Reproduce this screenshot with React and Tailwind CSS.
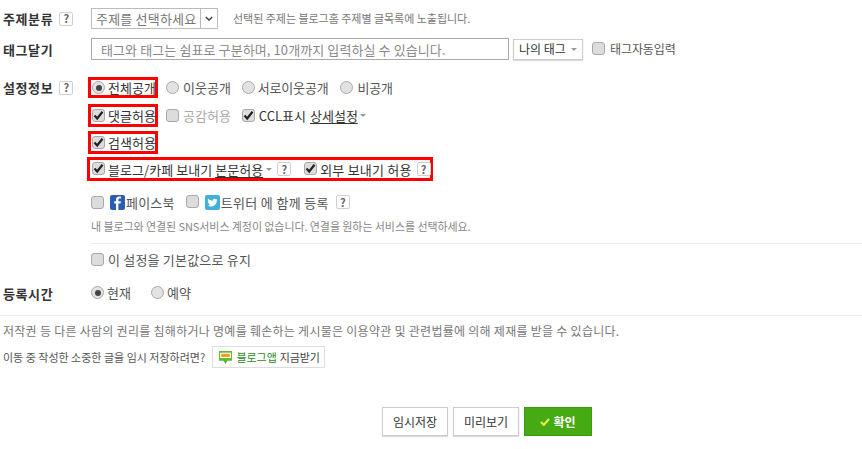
const KR = { fontFamily: '"Noto Sans CJK KR", "Liberation Sans", sans-serif' };

function Help({ className = "" }) {
  return (
    <span className={`inline-flex h-[14px] w-[14px] shrink-0 items-center justify-center rounded-[2px] border border-[#cfcfcf] bg-white text-[11px] font-bold leading-none text-[#666] ${className}`}>?</span>
  );
}

function Check({ on = false }) {
  return (
    <span className="relative inline-block h-[13px] w-[13px] shrink-0 rounded-[3px] border border-[#a9a9a9] bg-[#dcdcdc]">
      {on && (
        <svg viewBox="0 0 13 13" className="absolute left-[-1px] top-[-1px] h-[13px] w-[13px]">
          <path d="M2.5 6.5 L5.2 9.5 L10.5 2.8" fill="none" stroke="#222" strokeWidth="2.2" />
        </svg>
      )}
    </span>
  );
}

function Radio({ on = false }) {
  return (
    <span className="inline-flex h-[13px] w-[13px] shrink-0 items-center justify-center rounded-full border border-[#a9a9a9] bg-[#e2e2e2]">
      {on && <span className="h-[6px] w-[6px] rounded-full bg-[#444]" />}
    </span>
  );
}

function Caret({ className = "" }) {
  return <span className={`block h-0 w-0 border-x-[3px] border-t-[3px] border-x-transparent border-t-[#999] ${className}`} />;
}

function Row({ label, help, className = "", children }) {
  return (
    <div className={`flex items-center ${className}`}>
      <div className="flex w-[91px] shrink-0 items-center gap-[6px] pl-[3px]">
        {label && <span className="text-[13px] font-bold tracking-[0.6px] text-[#333]">{label}</span>}
        {help && <Help />}
      </div>
      {children}
    </div>
  );
}

export default function App() {
  return (
    <div style={KR} className="h-[449px] w-[862px] overflow-hidden bg-white text-[13px] leading-none text-[#555]">
      <Row label="주제분류" help className="pt-[8px]">
        <div className="flex h-[21px] w-[127px] items-center border border-[#bbb] text-[#777]">
          <span className="w-[108px] pl-[4px] text-[13px] tracking-[0.2px] whitespace-nowrap">주제를 선택하세요</span>
          <span className="flex h-full flex-1 items-center justify-center border-l border-[#bbb]">
            <svg viewBox="0 0 10 6" className="h-[5px] w-[8px]"><path d="M1 1 L5 5 L9 1" fill="none" stroke="#444" strokeWidth="1.8" /></svg>
          </span>
        </div>
        <span className="ml-[15px] text-[11px] tracking-[-0.03px] text-[#777]">선택된 주제는 블로그홈 주제별 글목록에 노출됩니다.</span>
      </Row>

      <Row label="태그달기" className="mt-[9px]">
        <div className="flex h-[22px] w-[418px] items-center border border-[#aaa] pl-[9px] text-[13px] tracking-[0.1px] text-[#888]">태그와 태그는 쉼표로 구분하며, 10개까지 입력하실 수 있습니다.</div>
        <span className="ml-[4px] flex h-[21px] w-[70px] items-center justify-center gap-[5px] border border-[#ccc] text-[12px] text-[#333] shadow-[0_1px_1px_#ddd]">나의 태그 <Caret /></span>
        <span className="ml-[9px]"><Check /></span>
        <span className="ml-[5px] text-[12px] tracking-[-0.1px] text-[#555]">태그자동입력</span>
      </Row>

      <Row label="설정정보" help className="mt-[17px]">
        <span className="-ml-[3px] flex h-[21px] w-[70px] items-center gap-[3px] border-[3px] border-[#f00] pl-[1px] whitespace-nowrap"><Radio on /><span className="text-[#333]">전체공개</span></span>
        <span className="ml-[8px] flex items-center gap-[4px]"><Radio />이웃공개</span>
        <span className="ml-[11px] flex items-center gap-[3px] tracking-[-0.2px]"><Radio />서로이웃공개</span>
        <span className="ml-[12px] flex items-center gap-[4px] tracking-[-0.2px]"><Radio />비공개</span>
      </Row>

      <div className="mt-[6px] ml-[88px] flex items-center">
        <span className="flex h-[23px] w-[70px] items-center gap-[3px] border-[3px] border-[#f00] pl-[1px] whitespace-nowrap"><Check on /><span className="text-[#333]">댓글허용</span></span>
        <span className="ml-[8px] flex items-center gap-[4px] text-[#aaa]"><Check />공감허용</span>
        <span className="ml-[11px] flex items-center gap-[4px] text-[#333]"><Check on />CCL표시</span>
        <span className="ml-[4px] flex items-center gap-[2px] text-[#333]"><span className="underline underline-offset-2">상세설정</span><Caret /></span>
      </div>

      <div className="mt-[4px] ml-[88px] flex">
        <span className="flex h-[23px] w-[70px] items-center gap-[3px] border-[3px] border-[#f00] pl-[1px] whitespace-nowrap"><Check on /><span className="text-[#333]">검색허용</span></span>
      </div>

      <div className="mt-[3px] ml-[87px] flex">
        <span className="flex h-[24px] w-[346px] items-center border-[3px] border-[#f00] pl-[1px] text-[#333]">
          <span className="ml-[1px]"><Check on /></span>
          <span className="ml-[3px] tracking-[0.05px] whitespace-nowrap">블로그/카페 보내기 <span className="underline underline-offset-2">본문허용</span></span>
          <Caret className="ml-[3px]" />
          <Help className="ml-[5px]" />
          <span className="ml-[13px]"><Check on /></span>
          <span className="ml-[3px] tracking-[0.2px] whitespace-nowrap">외부 보내기 허용</span>
          <Help className="ml-[5px]" />
        </span>
      </div>

      <div className="mt-[13px] ml-[91px] flex h-[16px] items-center">
        <Check />
        <svg viewBox="0 0 15 15" className="ml-[6px] h-[15px] w-[15px]">
          <rect width="15" height="15" rx="2" fill="#2a5db0" />
          <path d="M8.4 15 V8.6 H10.5 L10.9 6.2 H8.4 V4.9 C8.4 4.1 8.7 3.6 9.7 3.6 H11 V1.5 H9.2 C7.2 1.5 6 2.7 6 4.6 V6.2 H4.2 V8.6 H6 V15 Z" fill="#fff" />
        </svg>
        <span className="ml-[1px] tracking-[0.2px]">페이스북</span>
        <span className="ml-[11px]"><Check /></span>
        <svg viewBox="0 0 15 15" className="ml-[6px] h-[15px] w-[15px]">
          <rect width="15" height="15" rx="2" fill="#3fb0dc" />
          <path d="M12.5 4.6 C12 4.8 11.6 4.9 11.1 5 C11.6 4.7 12 4.2 12.2 3.7 C11.7 4 11.2 4.2 10.6 4.3 C9.5 3.2 7.4 4 7.7 5.9 C5.8 5.8 4.2 4.9 3.1 3.6 C2.6 4.5 2.8 5.7 3.7 6.3 C3.3 6.3 3 6.2 2.7 6 C2.7 7.1 3.4 7.9 4.4 8.2 C4.1 8.3 3.8 8.3 3.4 8.2 C3.7 9.1 4.5 9.7 5.4 9.7 C4.5 10.4 3.4 10.8 2.2 10.6 C6.8 13.2 12 10 11.7 5.7 C12 5.5 12.3 5.1 12.5 4.6 Z" fill="#fff" />
        </svg>
        <span className="ml-[1px] tracking-[0.35px] whitespace-nowrap">트위터 에 함께 등록</span>
        <Help className="ml-[7px]" />
      </div>

      <div className="mt-[11px] ml-[91px] text-[11px] tracking-[-0.08px] text-[#888]">내 블로그와 연결된 SNS서비스 계정이 없습니다. 연결을 원하는 서비스를 선택하세요.</div>

      <div className="mt-[11px] ml-[91px] border-t border-[#eee]" />

      <div className="mt-[9px] ml-[91px] flex items-center gap-[4px]">
        <Check /><span className="tracking-[0.2px]">이 설정을 기본값으로 유지</span>
      </div>

      <Row label="등록시간" className="mt-[21px]">
        <span className="flex items-center gap-[3px] -translate-y-[1px]"><Radio on />현재</span>
        <span className="ml-[20px] flex items-center gap-[3px] -translate-y-[1px]"><Radio />예약</span>
      </Row>

      <div className="mt-[15px] border-t border-[#eee]" />

      <div className="mt-[9px] pl-[3px] text-[12px] tracking-[0.27px] whitespace-nowrap text-[#777]">저작권 등 다른 사람의 권리를 침해하거나 명예를 훼손하는 게시물은 이용약관 및 관련법률에 의해 제재를 받을 수 있습니다.</div>

      <div className="mt-[9px] flex items-center pl-[3px]">
        <span className="text-[11px] text-[#555]">이동 중 작성한 소중한 글을 임시 저장하려면?</span>
        <span className="ml-[7px] flex h-[22px] w-[113px] items-center justify-center border border-[#ddd] text-[11px]">
          <svg viewBox="0 0 14 14" className="h-[15px] w-[15px]">
            <path d="M1 1 H13 V10 H9 L7 13 L5 10 H1 Z" fill="#5fb82e" />
            <rect x="2" y="2.5" width="10" height="5" fill="#fff" />
            <rect x="3" y="3.5" width="8" height="3" fill="#e8a020" />
          </svg>
          <span className="ml-[4px] tracking-[-0.1px] text-[#2d8a1e]">블로그앱</span><span className="ml-[3px] tracking-[-0.1px] text-[#444]">지금받기</span>
        </span>
      </div>

      <div className="mt-[39px] flex justify-center gap-[5px] pl-[112px]">
        <span className="flex h-[29px] w-[66px] items-center justify-center border border-[#ccc] text-[12px] text-[#333] shadow-[0_1px_1px_#ddd]">임시저장</span>
        <span className="flex h-[29px] w-[66px] items-center justify-center border border-[#ccc] text-[12px] text-[#333] shadow-[0_1px_1px_#ddd]">미리보기</span>
        <span className="flex h-[29px] w-[68px] items-center justify-center gap-[3px] border border-[#3c9a0c] bg-[#46ab12] text-[12px] font-bold text-white">
          <svg viewBox="0 0 10 8" className="h-[8px] w-[10px]"><path d="M1 4 L3.8 7 L9 1" fill="none" stroke="#e6f14a" strokeWidth="2" /></svg>
          확인
        </span>
      </div>
    </div>
  );
}
